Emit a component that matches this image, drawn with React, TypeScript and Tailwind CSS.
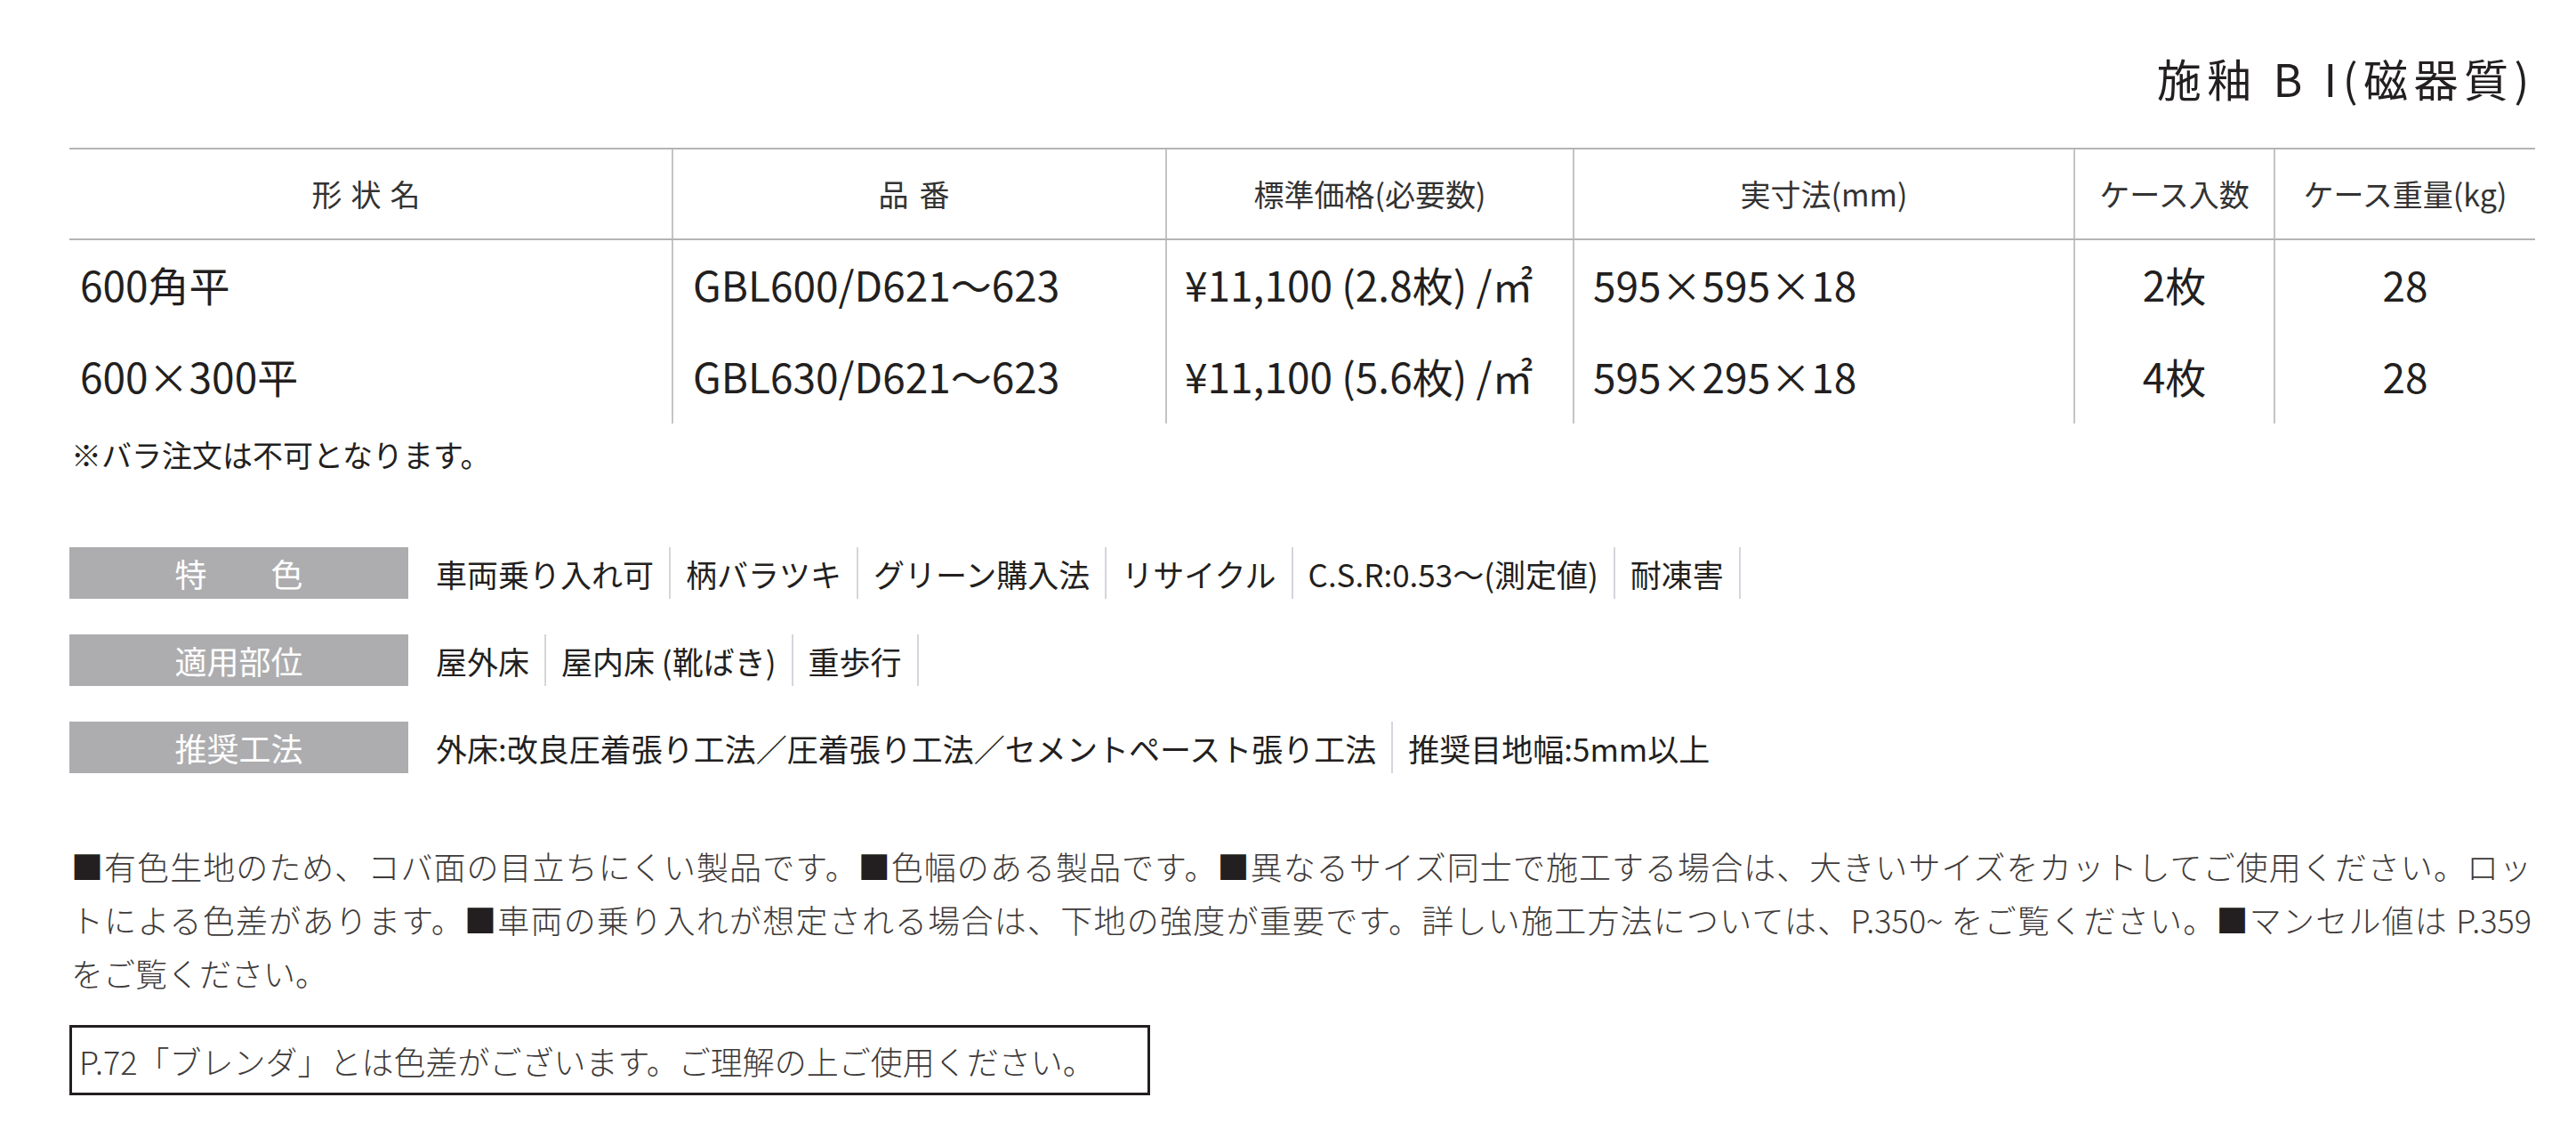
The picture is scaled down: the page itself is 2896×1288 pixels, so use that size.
import React from "react";

const headers = [
  { label: "形状名", cls: "tracking-[10px]" },
  { label: "品番", cls: "tracking-[12px]" },
  { label: "標準価格(必要数)", cls: "" },
  { label: "実寸法(mm)", cls: "" },
  { label: "ケース入数", cls: "" },
  { label: "ケース重量(kg)", cls: "" },
];

const rows = [
  ["600角平", "GBL600/D621〜623", "¥11,100 (2.8枚) /㎡", "595×595×18", "2枚", "28"],
  ["600×300平", "GBL630/D621〜623", "¥11,100 (5.6枚) /㎡", "595×295×18", "4枚", "28"],
];

const features: { label: string; items: string[]; trailing: boolean }[] = [
  {
    label: "特　　色",
    items: ["車両乗り入れ可", "柄バラツキ", "グリーン購入法", "リサイクル", "C.S.R:0.53〜(測定値)", "耐凍害"],
    trailing: true,
  },
  { label: "適用部位", items: ["屋外床", "屋内床 (靴ばき)", "重歩行"], trailing: true },
  {
    label: "推奨工法",
    items: ["外床:改良圧着張り工法／圧着張り工法／セメントペースト張り工法", "推奨目地幅:5mm以上"],
    trailing: false,
  },
];

function Sq() {
  return <span className="text-[#231f20]">■</span>;
}

function FeatureRow({ label, items, trailing }: { label: string; items: string[]; trailing: boolean }) {
  return (
    <div className="flex h-[58px]">
      <div className="w-[381px] bg-[#adadaf] text-white text-[36px] flex items-center justify-center">{label}</div>
      <div className="flex pl-[31px] text-[35px] text-[#231f20]">
        {items.map((it, i) => (
          <div key={i} className="flex">
            <span className="flex items-center whitespace-nowrap">{it}</span>
            {(trailing || i < items.length - 1) && <div className="w-[2px] bg-[#d3d6dc] mx-[17px]" />}
          </div>
        ))}
      </div>
    </div>
  );
}

export default function App() {
  return (
    <div className="w-[2896px] h-[1288px] bg-white pl-[78px] pr-[46px] pt-[62px] font-['Noto_Sans_CJK_JP',sans-serif] text-[#231f20] leading-none">
      <div className="text-right text-[50px] tracking-[6.5px] h-[104px]">施釉 B I(磁器質)</div>

      <div className="border-t-2 border-[#b4b4b4]">
        <div className="grid grid-cols-[677px_555px_458px_563px_225px_294px] border-b-2 border-[#b4b4b4] h-[102px] text-[34px] text-[#333]">
          {headers.map((h, i) => (
            <div key={i} className={`flex items-center justify-center ${i > 0 ? "border-l-2 border-[#c4c4c4]" : ""}`}>
              <span className={h.cls}>{h.label}</span>
            </div>
          ))}
        </div>
        {rows.map((r, ri) => (
          <div key={ri} className="grid grid-cols-[677px_555px_458px_563px_225px_294px] h-[103px] text-[46px]">
            <div className="flex items-center pl-[12px] pb-[6px]">{r[0]}</div>
            <div className="flex items-center pl-[22px] pb-[6px] border-l-2 border-[#c4c4c4]">{r[1]}</div>
            <div className="flex items-center pl-[20px] pb-[6px] border-l-2 border-[#c4c4c4] whitespace-nowrap">{r[2]}</div>
            <div className="flex items-center pl-[21px] pb-[6px] border-l-2 border-[#c4c4c4]">{r[3]}</div>
            <div className="flex items-center justify-center pb-[6px] border-l-2 border-[#c4c4c4]">{r[4]}</div>
            <div className="flex items-center justify-center pb-[6px] border-l-2 border-[#c4c4c4]">{r[5]}</div>
          </div>
        ))}
      </div>

      <div className="text-[34px] mt-[18px] pl-[2px]">※バラ注文は不可となります。</div>

      <div className="mt-[87px] flex flex-col gap-[40px]">
        {features.map((f, i) => (
          <FeatureRow key={i} label={f.label} items={f.items} trailing={f.trailing} />
        ))}
      </div>

      <div className="mt-[74px] text-[36px] text-[#3e3a39] font-light w-[2768px] pl-[2px]">
        <div className="h-[60px] leading-[60px] text-justify [text-align-last:justify] whitespace-nowrap">
          <Sq />有色生地のため、コバ面の目立ちにくい製品です。<Sq />色幅のある製品です。<Sq />異なるサイズ同士で施工する場合は、大きいサイズをカットしてご使用ください。ロッ
        </div>
        <div className="h-[60px] leading-[60px] text-justify [text-align-last:justify] whitespace-nowrap">
          トによる色差があります。<Sq />車両の乗り入れが想定される場合は、下地の強度が重要です。詳しい施工方法については、P.350~ をご覧ください。<Sq />マンセル値は P.359
        </div>
        <div className="h-[60px] leading-[60px]">をご覧ください。</div>
      </div>

      <div className="mt-[29px] w-[1215px] h-[79px] border-[3px] border-[#231f20] flex items-center pl-[8px] text-[36px] text-[#3e3a39] font-light">
        P.72「ブレンダ」とは色差がございます。ご理解の上ご使用ください。
      </div>
    </div>
  );
}
